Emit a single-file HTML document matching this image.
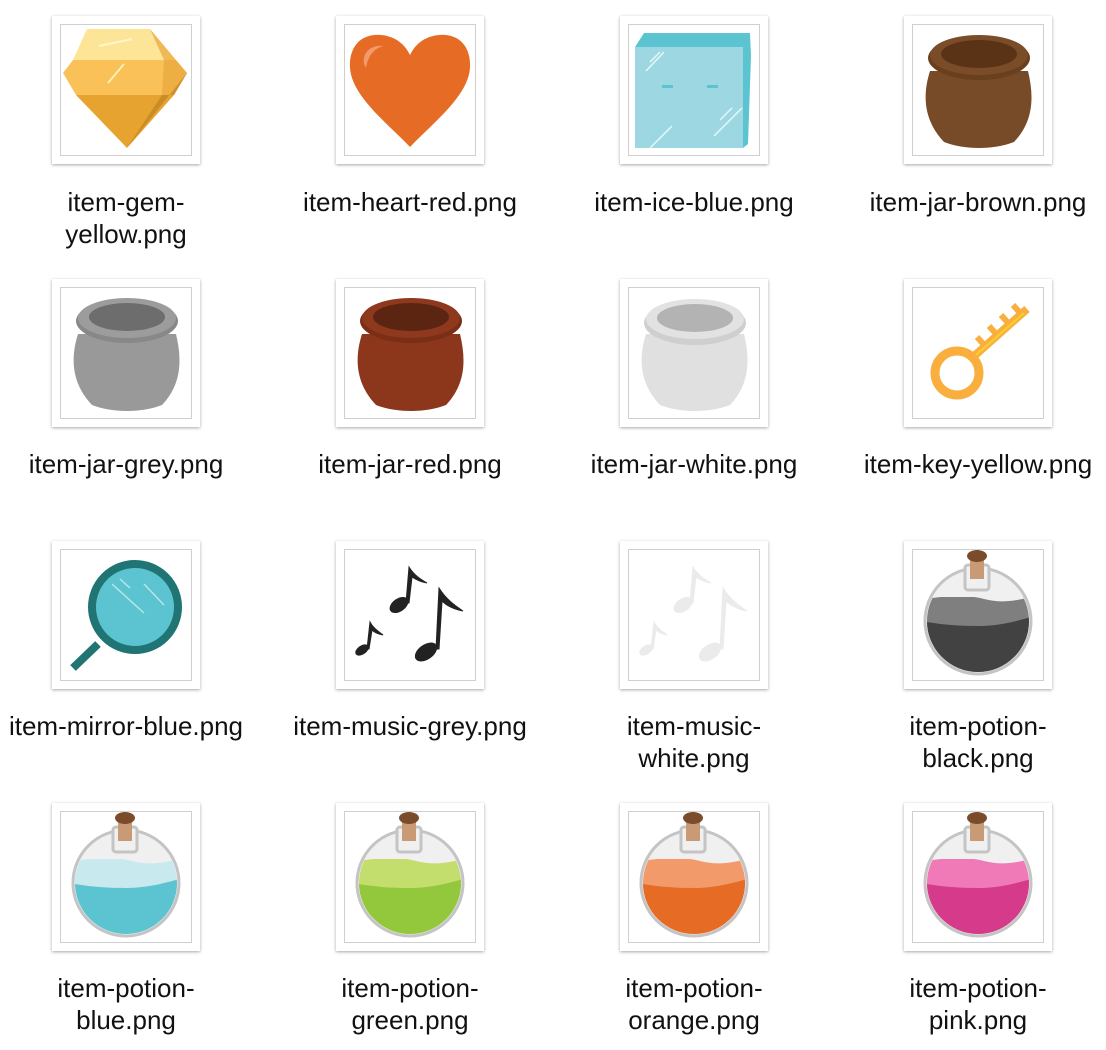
<!DOCTYPE html>
<html><head><meta charset="utf-8"><style>
html,body{margin:0;padding:0;background:#fff;}
body{width:1106px;height:1050px;position:relative;overflow:hidden;font-family:"Liberation Sans",Arial,sans-serif;}
.t{position:absolute;width:148px;height:148px;background:#fff;box-shadow:0 1px 3px rgba(0,0,0,0.35);}
.t:before{content:"";position:absolute;left:8px;top:8px;width:130px;height:130px;border:1px solid #cfcfcf;}
.t svg{position:absolute;left:0;top:0;}
.l{position:absolute;width:284px;text-align:center;font-size:26px;line-height:32px;color:#111;white-space:nowrap;}
</style></head><body>
<svg width="0" height="0" style="position:absolute">
<defs>
<clipPath id="fc"><circle cx="74" cy="80" r="51"/></clipPath>
<g id="flask">
<circle cx="74" cy="80" r="53" fill="#f0f0f0" stroke="#c4c4c4" stroke-width="3"/>
</g>
</defs></svg>

<!-- Row 1 -->
<div class="t" style="left:52px;top:16px"><svg width="148" height="148" viewBox="0 0 148 148">
<polygon points="35,13 98,13 124,44 21,44" fill="#fde597"/>
<polygon points="21,44 124,44 135,57 122,79 24,79 11,57" fill="#f9c158"/>
<polygon points="24,79 122,79 75,132" fill="#e6a330"/>
<polygon points="98,13 124,44 135,57 122,79 110,79 112,44" fill="#e8a63a" opacity="0.7"/>
<polygon points="110,79 122,79 135,57 75,132" fill="#b97d22" opacity="0.6"/>
<line x1="47" y1="30" x2="80" y2="23" stroke="#fff6cc" stroke-width="2"/>
<line x1="56" y1="67" x2="72" y2="48" stroke="#fff0b0" stroke-width="2"/>
</svg></div>
<div class="l" style="left:-16px;top:186px">item-gem-<br>yellow.png</div>

<div class="t" style="left:336px;top:16px"><svg width="148" height="148" viewBox="0 0 148 148">
<path d="M74,39 C66,22 50,18 38,19 C20,21 13,36 14,52 C16,80 50,106 74,131 C98,106 132,80 134,52 C135,36 128,21 110,19 C98,18 82,22 74,39 Z" fill="#e66b25"/>
<path d="M28,48 C26,36 36,28 48,30 C38,32 32,40 30,52 Z" fill="#f39a6b"/>
</svg></div>
<div class="l" style="left:268px;top:186px">item-heart-red.png</div>

<div class="t" style="left:620px;top:16px"><svg width="148" height="148" viewBox="0 0 148 148">
<polygon points="24,17 130,17 131,40 128,128 123,132 15,132 15,31" fill="#5bc4d0"/>
<rect x="15" y="31" width="108" height="101" fill="#9dd8e2"/>
<rect x="42" y="69" width="11" height="3" fill="#5bc4d0"/>
<rect x="87" y="69" width="11" height="3" fill="#5bc4d0"/>
<line x1="26" y1="55" x2="44" y2="36" stroke="#e6f7fa" stroke-width="1.5"/>
<line x1="30" y1="46" x2="40" y2="36" stroke="#e6f7fa" stroke-width="1.5"/>
<line x1="94" y1="120" x2="122" y2="92" stroke="#e6f7fa" stroke-width="1.5"/>
<line x1="100" y1="104" x2="112" y2="92" stroke="#e6f7fa" stroke-width="1.5"/>
<line x1="30" y1="132" x2="52" y2="110" stroke="#e6f7fa" stroke-width="1.5"/>
</svg></div>
<div class="l" style="left:552px;top:186px">item-ice-blue.png</div>

<div class="t" style="left:904px;top:16px"><svg width="148" height="148" viewBox="0 0 148 148">
<path d="M26,55 C18,80 20,105 40,126 C60,134 90,134 110,126 C130,105 130,80 124,55 Z" fill="#774b27"/>
<ellipse cx="75" cy="42" rx="51" ry="22" fill="#6a3f1d"/>
<ellipse cx="75" cy="39" rx="49" ry="20" fill="#7a4c28"/>
<ellipse cx="75" cy="38" rx="38" ry="14" fill="#5a3317"/>
</svg></div>
<div class="l" style="left:836px;top:186px">item-jar-brown.png</div>

<!-- Row 2 -->
<div class="t" style="left:52px;top:279px"><svg width="148" height="148" viewBox="0 0 148 148">
<path d="M26,55 C18,80 20,105 40,126 C60,134 90,134 110,126 C130,105 130,80 124,55 Z" fill="#999"/>
<ellipse cx="75" cy="42" rx="51" ry="22" fill="#888"/>
<ellipse cx="75" cy="39" rx="49" ry="20" fill="#9c9c9c"/>
<ellipse cx="75" cy="38" rx="38" ry="14" fill="#6d6d6d"/>
</svg></div>
<div class="l" style="left:-16px;top:448px">item-jar-grey.png</div>

<div class="t" style="left:336px;top:279px"><svg width="148" height="148" viewBox="0 0 148 148">
<path d="M26,55 C18,80 20,105 40,126 C60,134 90,134 110,126 C130,105 130,80 124,55 Z" fill="#8c361c"/>
<ellipse cx="75" cy="42" rx="51" ry="22" fill="#7a2e16"/>
<ellipse cx="75" cy="39" rx="49" ry="20" fill="#8e381e"/>
<ellipse cx="75" cy="38" rx="38" ry="14" fill="#5c2512"/>
</svg></div>
<div class="l" style="left:268px;top:448px">item-jar-red.png</div>

<div class="t" style="left:620px;top:279px"><svg width="148" height="148" viewBox="0 0 148 148">
<path d="M26,55 C18,80 20,105 40,126 C60,134 90,134 110,126 C130,105 130,80 124,55 Z" fill="#e0e0e0"/>
<ellipse cx="75" cy="44" rx="51" ry="22" fill="#cfcfcf"/>
<ellipse cx="75" cy="40" rx="49" ry="20" fill="#e2e2e2"/>
<ellipse cx="75" cy="39" rx="38" ry="14" fill="#b3b3b3"/>
</svg></div>
<div class="l" style="left:552px;top:448px">item-jar-white.png</div>

<div class="t" style="left:904px;top:279px"><svg width="148" height="148" viewBox="0 0 148 148">
<circle cx="53" cy="94" r="22" fill="none" stroke="#f9ae3e" stroke-width="9"/>
<line x1="69" y1="78" x2="123" y2="30" stroke="#f9ae3e" stroke-width="8"/>
<path d="M82,68 L73,58 M94,57 L85,47 M106,46 L97,36 M118,36 L109,26" stroke="#f9ae3e" stroke-width="6" fill="none"/>
<line x1="72" y1="76" x2="120" y2="34" stroke="#f7d02a" stroke-width="2"/>
</svg></div>
<div class="l" style="left:836px;top:448px">item-key-yellow.png</div>

<!-- Row 3 -->
<div class="t" style="left:52px;top:541px"><svg width="148" height="148" viewBox="0 0 148 148">
<line x1="46" y1="103" x2="21" y2="127" stroke="#207474" stroke-width="8"/>
<circle cx="83" cy="66" r="43" fill="#5bc4d0" stroke="#207474" stroke-width="8"/>
<line x1="60" y1="43" x2="92" y2="72" stroke="#b6e6ec" stroke-width="1.5"/>
<line x1="68" y1="38" x2="78" y2="47" stroke="#b6e6ec" stroke-width="1.5"/>
<line x1="92" y1="43" x2="112" y2="64" stroke="#b6e6ec" stroke-width="1.5"/>
</svg></div>
<div class="l" style="left:-16px;top:710px">item-mirror-blue.png</div>

<div class="t" style="left:336px;top:541px"><svg width="148" height="148" viewBox="0 0 148 148">
<g fill="#222" stroke="#222">
<ellipse cx="90" cy="111" rx="12" ry="7" transform="rotate(-35 90 111)"/>
<path d="M100,108 L103,47 C110,58 118,64 127,70 C117,68 110,64 106,60 L103,108 Z" stroke-width="1"/>
<ellipse cx="63" cy="64" rx="10" ry="6" transform="rotate(-35 63 64)"/>
<path d="M70,62 L73,26 C78,34 84,38 91,42 C84,41 79,38 76,36 L73,62 Z" stroke-width="1"/>
<ellipse cx="26" cy="109" rx="7" ry="4" transform="rotate(-35 26 109)"/>
<path d="M31,108 L34,81 C37,87 42,90 47,94 C42,93 38,91 36,89 L33,108 Z" stroke-width="1"/>
</g></svg></div>
<div class="l" style="left:268px;top:710px">item-music-grey.png</div>

<div class="t" style="left:620px;top:541px"><svg width="148" height="148" viewBox="0 0 148 148">
<g fill="#ebebeb" stroke="#ebebeb">
<ellipse cx="90" cy="111" rx="12" ry="7" transform="rotate(-35 90 111)"/>
<path d="M100,108 L103,47 C110,58 118,64 127,70 C117,68 110,64 106,60 L103,108 Z" stroke-width="1"/>
<ellipse cx="63" cy="64" rx="10" ry="6" transform="rotate(-35 63 64)"/>
<path d="M70,62 L73,26 C78,34 84,38 91,42 C84,41 79,38 76,36 L73,62 Z" stroke-width="1"/>
<ellipse cx="26" cy="109" rx="7" ry="4" transform="rotate(-35 26 109)"/>
<path d="M31,108 L34,81 C37,87 42,90 47,94 C42,93 38,91 36,89 L33,108 Z" stroke-width="1"/>
</g></svg></div>
<div class="l" style="left:552px;top:710px">item-music-<br>white.png</div>

<div class="t" style="left:904px;top:541px"><svg width="148" height="148" viewBox="0 0 148 148">
<use href="#flask"/>
<g clip-path="url(#fc)"><rect x="0" y="56" width="148" height="90" fill="#7f7f7f"/>
<path d="M0,62 C30,56 58,52 80,58 C100,63 115,60 148,50 L148,0 L0,0 Z" fill="#f0f0f0"/>
<path d="M0,76 C30,84 55,85 74,85 C100,85 120,78 148,70 L148,148 L0,148 Z" fill="#424242"/></g>
<rect x="61" y="24" width="24" height="25" rx="3" fill="#f0f0f0" stroke="#c4c4c4" stroke-width="3"/>
<rect x="66" y="14" width="14" height="24" fill="#c89a76"/>
<ellipse cx="73" cy="15" rx="10" ry="6" fill="#7a4c2c"/>
</svg></div>
<div class="l" style="left:836px;top:710px">item-potion-<br>black.png</div>

<!-- Row 4 -->
<div class="t" style="left:52px;top:803px"><svg width="148" height="148" viewBox="0 0 148 148">
<use href="#flask"/>
<g clip-path="url(#fc)"><rect x="0" y="56" width="148" height="90" fill="#c8eaef"/>
<path d="M0,62 C30,56 58,52 80,58 C100,63 115,60 148,50 L148,0 L0,0 Z" fill="#f0f0f0"/>
<path d="M0,76 C30,84 55,85 74,85 C100,85 120,78 148,70 L148,148 L0,148 Z" fill="#5cc4d0"/></g>
<rect x="61" y="24" width="24" height="25" rx="3" fill="#f0f0f0" stroke="#c4c4c4" stroke-width="3"/>
<rect x="66" y="14" width="14" height="24" fill="#c89a76"/>
<ellipse cx="73" cy="15" rx="10" ry="6" fill="#7a4c2c"/>
</svg></div>
<div class="l" style="left:-16px;top:972px">item-potion-<br>blue.png</div>

<div class="t" style="left:336px;top:803px"><svg width="148" height="148" viewBox="0 0 148 148">
<use href="#flask"/>
<g clip-path="url(#fc)"><rect x="0" y="56" width="148" height="90" fill="#c4de6e"/>
<path d="M0,62 C30,56 58,52 80,58 C100,63 115,60 148,50 L148,0 L0,0 Z" fill="#f0f0f0"/>
<path d="M0,76 C30,84 55,85 74,85 C100,85 120,78 148,70 L148,148 L0,148 Z" fill="#94c83c"/></g>
<rect x="61" y="24" width="24" height="25" rx="3" fill="#f0f0f0" stroke="#c4c4c4" stroke-width="3"/>
<rect x="66" y="14" width="14" height="24" fill="#c89a76"/>
<ellipse cx="73" cy="15" rx="10" ry="6" fill="#7a4c2c"/>
</svg></div>
<div class="l" style="left:268px;top:972px">item-potion-<br>green.png</div>

<div class="t" style="left:620px;top:803px"><svg width="148" height="148" viewBox="0 0 148 148">
<use href="#flask"/>
<g clip-path="url(#fc)"><rect x="0" y="56" width="148" height="90" fill="#f39a6b"/>
<path d="M0,62 C30,56 58,52 80,58 C100,63 115,60 148,50 L148,0 L0,0 Z" fill="#f0f0f0"/>
<path d="M0,76 C30,84 55,85 74,85 C100,85 120,78 148,70 L148,148 L0,148 Z" fill="#e66b25"/></g>
<rect x="61" y="24" width="24" height="25" rx="3" fill="#f0f0f0" stroke="#c4c4c4" stroke-width="3"/>
<rect x="66" y="14" width="14" height="24" fill="#c89a76"/>
<ellipse cx="73" cy="15" rx="10" ry="6" fill="#7a4c2c"/>
</svg></div>
<div class="l" style="left:552px;top:972px">item-potion-<br>orange.png</div>

<div class="t" style="left:904px;top:803px"><svg width="148" height="148" viewBox="0 0 148 148">
<use href="#flask"/>
<g clip-path="url(#fc)"><rect x="0" y="56" width="148" height="90" fill="#f07ab8"/>
<path d="M0,62 C30,56 58,52 80,58 C100,63 115,60 148,50 L148,0 L0,0 Z" fill="#f0f0f0"/>
<path d="M0,76 C30,84 55,85 74,85 C100,85 120,78 148,70 L148,148 L0,148 Z" fill="#d63a8a"/></g>
<rect x="61" y="24" width="24" height="25" rx="3" fill="#f0f0f0" stroke="#c4c4c4" stroke-width="3"/>
<rect x="66" y="14" width="14" height="24" fill="#c89a76"/>
<ellipse cx="73" cy="15" rx="10" ry="6" fill="#7a4c2c"/>
</svg></div>
<div class="l" style="left:836px;top:972px">item-potion-<br>pink.png</div>

</body></html>
